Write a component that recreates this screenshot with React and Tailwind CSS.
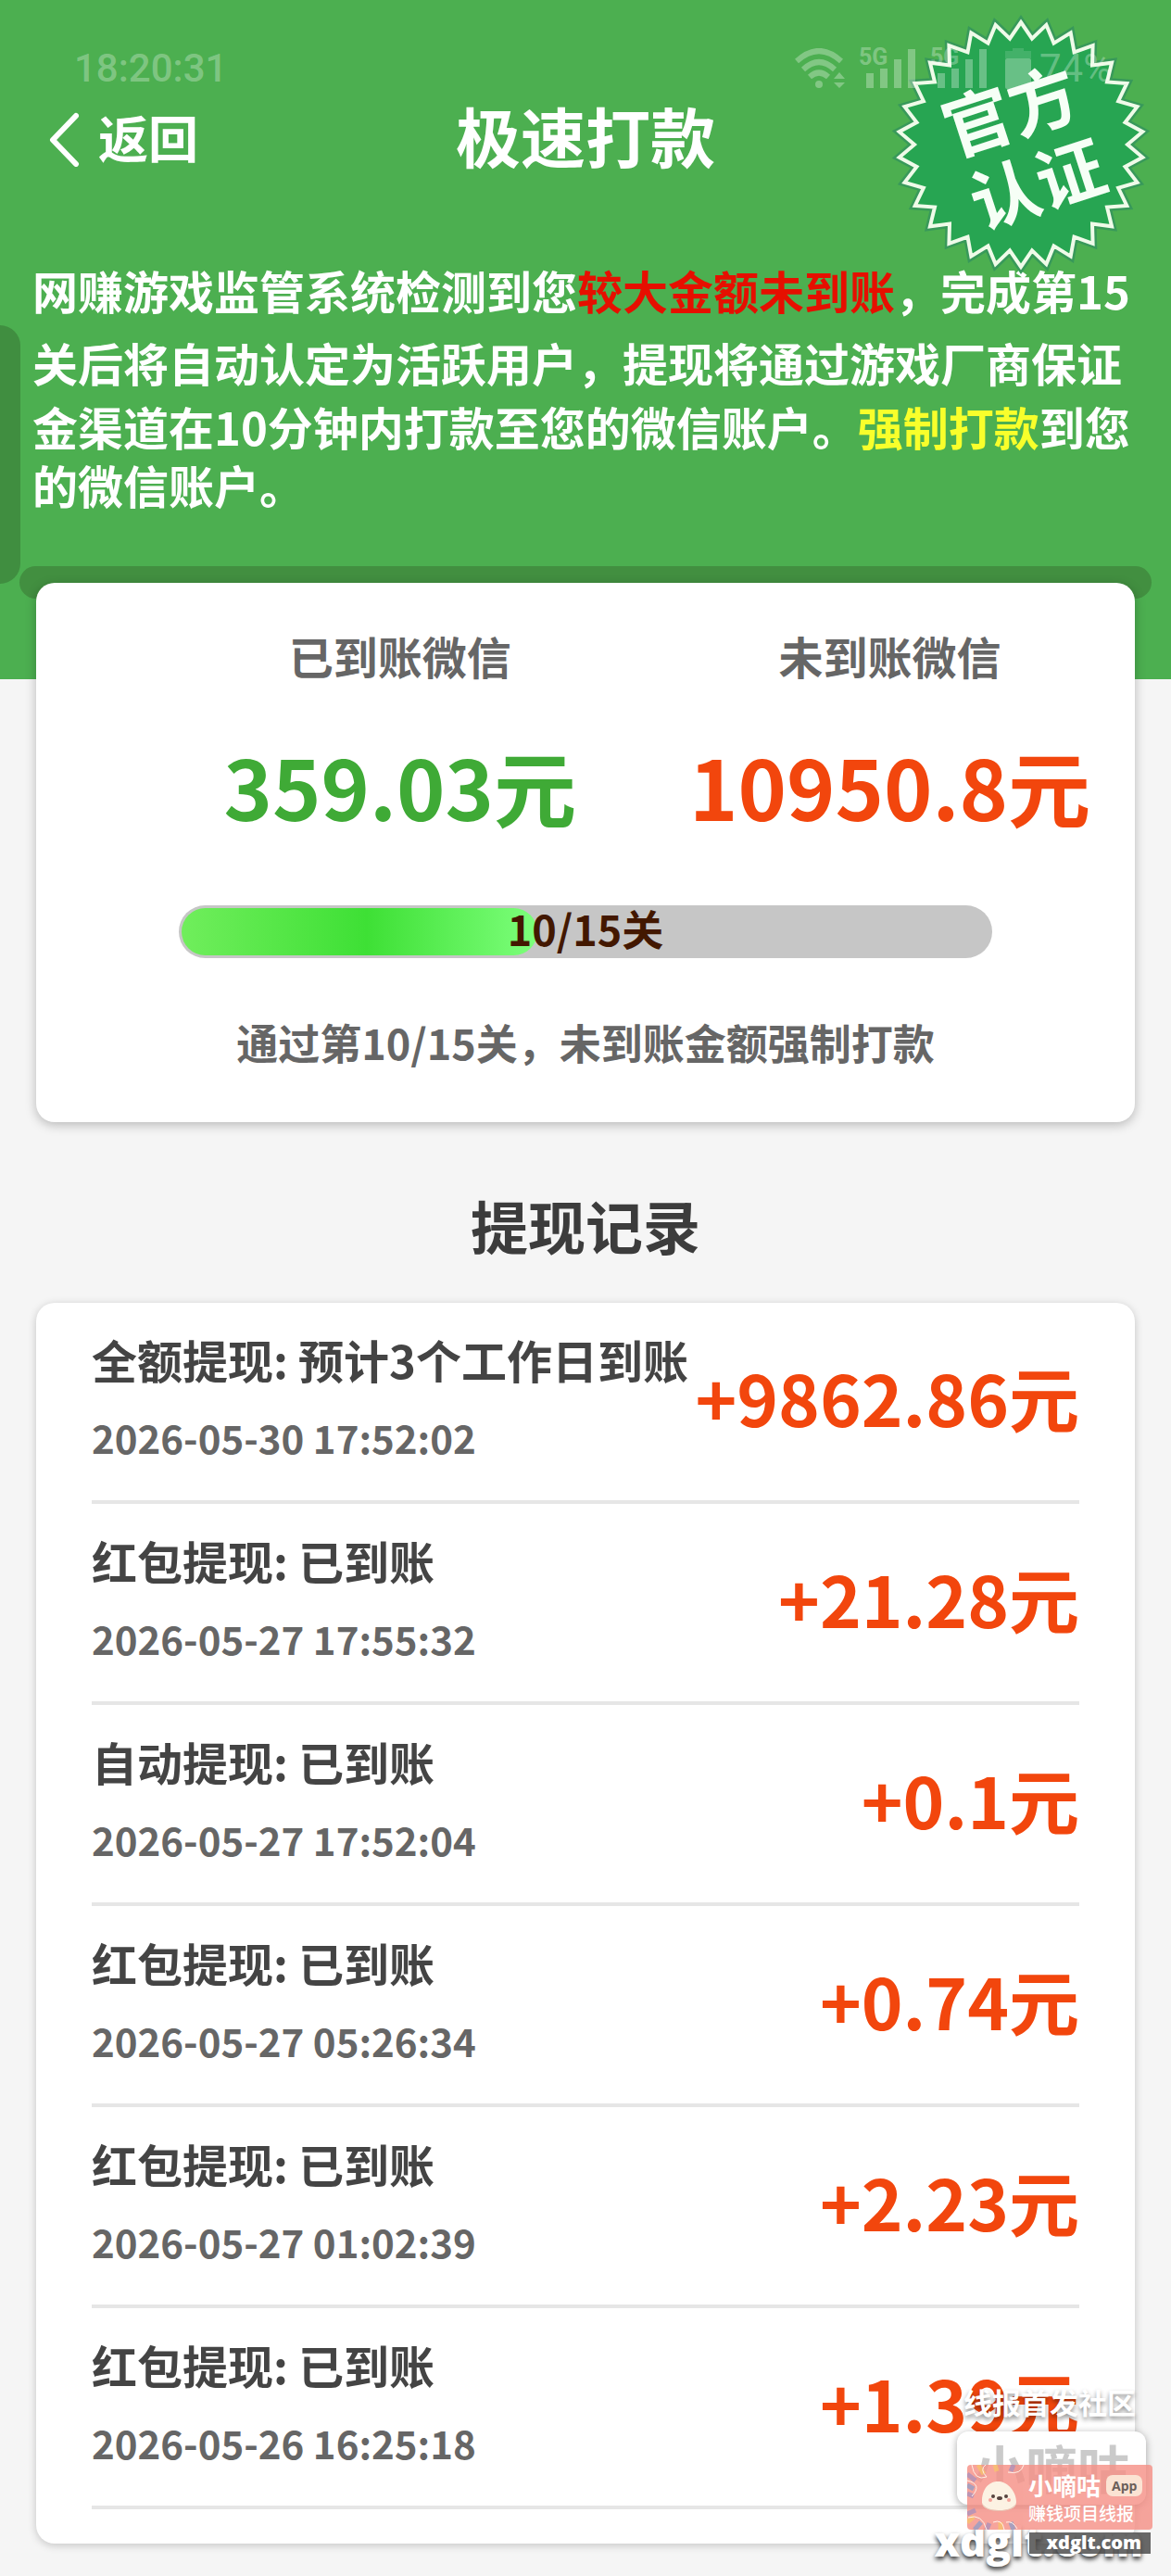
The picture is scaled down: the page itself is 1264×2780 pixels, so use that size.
import React from "react";

const records = [
  { title: "全额提现: 预计3个工作日到账", time: "2026-05-30 17:52:02", amount: "+9862.86元" },
  { title: "红包提现: 已到账", time: "2026-05-27 17:55:32", amount: "+21.28元" },
  { title: "自动提现: 已到账", time: "2026-05-27 17:52:04", amount: "+0.1元" },
  { title: "红包提现: 已到账", time: "2026-05-27 05:26:34", amount: "+0.74元" },
  { title: "红包提现: 已到账", time: "2026-05-27 01:02:39", amount: "+2.23元" },
  { title: "红包提现: 已到账", time: "2026-05-26 16:25:18", amount: "+1.39元" },
];

const sealPoints = Array.from({ length: 60 }, (_, i) => {
  const r = i % 2 === 0 ? 132 : 115;
  const a = (i * Math.PI) / 30 - Math.PI / 2;
  return `${(140 + r * Math.cos(a)).toFixed(1)},${(140 + r * Math.sin(a)).toFixed(1)}`;
}).join(" ");

function Seal() {
  return (
    <div className="absolute top-[16px] right-[22px] h-[280px] w-[280px]">
      <svg viewBox="0 0 280 280" className="h-full w-full" aria-hidden="true">
        <polygon points={sealPoints} fill="#27a552" stroke="#38995a" strokeWidth="9" />
        <polygon points={sealPoints} fill="#27a552" stroke="#effbe9" strokeWidth="4" />
      </svg>
      <div className="absolute inset-0 flex -rotate-[18deg] flex-col items-center justify-center text-[74px] leading-[84px] font-bold text-[#f6fff6]">
        <span>官方</span>
        <span className="pl-2">认证</span>
      </div>
    </div>
  );
}

function Signal() {
  return (
    <div className="relative h-[44px] w-[61px]">
      <span className="absolute top-0 left-0 font-[Roboto] text-[25px] leading-[20px] font-bold">5G</span>
      <svg viewBox="0 0 61 44" className="h-full w-full" fill="currentColor" aria-hidden="true">
        <rect x="8" y="27" width="8" height="16" />
        <rect x="23" y="22" width="8" height="21" />
        <rect x="38" y="12" width="8" height="31" />
        <rect x="53" y="1" width="8" height="42" />
      </svg>
    </div>
  );
}

function StatusBar() {
  return (
    <div className="relative z-10 flex h-[44px] items-center justify-between pr-[64px] pl-[80px] text-white/30">
      <span className="font-[Roboto] text-[42px] leading-[44px] font-medium">18:20:31</span>
      <div className="flex items-center">
        <svg width="54" height="44" viewBox="0 0 54 44" fill="none" stroke="currentColor" strokeWidth="6" aria-hidden="true">
          <path d="M2 14 Q26 -8 50 14" />
          <path d="M9 23 Q26 7 43 23" />
          <path d="M16 31 Q26 22 36 31" />
          <circle cx="26" cy="39" r="4" fill="currentColor" stroke="none" />
          <path d="M42 33 L48 26 L54 33 Z M42 37 L48 43 L54 37 Z" fill="currentColor" stroke="none" />
        </svg>
        <div className="ml-[15px] flex gap-[16px]">
          <Signal />
          <Signal />
        </div>
        <svg width="28" height="44" viewBox="0 0 28 44" className="ml-[20px]" fill="currentColor" aria-hidden="true">
          <path d="M8 0h12v3h8v8H0V3h8z" opacity="0.45" />
          <rect y="11" width="28" height="33" rx="2" />
        </svg>
        <span className="ml-[9px] font-[Roboto] text-[42px] leading-[44px]">74%</span>
      </div>
    </div>
  );
}

function Balance({ label, value, tone }) {
  return (
    <div className="flex flex-col items-center">
      <span className="text-[48px] leading-[70px] font-bold text-[#666]">{label}</span>
      <strong className={"mt-[46px] text-[89px] leading-[120px] font-bold " + tone}>{value}</strong>
    </div>
  );
}

function Watermark() {
  return (
    <div className="absolute right-0 bottom-0 h-[204px] w-[256px] font-bold text-white">
      <span className="absolute top-0 right-[38px] text-[31px] leading-[32px] whitespace-nowrap [text-shadow:0_3px_5px_rgba(0,0,0,0.45)]">线报首发社区</span>
      <div className="absolute top-[48px] right-[27px] h-[79px] w-[204px] rounded-[12px] bg-white text-center text-[56px] leading-[76px] text-[#cacaca] shadow-[0_2px_8px_rgba(0,0,0,0.35)]">小嘀咕</div>
      <span className="absolute right-[30px] bottom-[16px] font-[Open_Sans] text-[44px] leading-[44px] font-extrabold [text-shadow:0_3px_5px_rgba(0,0,0,0.8)]">xdglt.com</span>
      <div className="absolute top-[84px] right-[20px] h-[70px] w-[200px] overflow-hidden rounded-[4px] bg-[#f58f84]/80">
        <svg width="68" height="70" viewBox="0 0 68 70" className="absolute" fill="none" aria-hidden="true">
          <g strokeWidth="5" opacity="0.75">
            <path d="M0 10l9 7M0 31l7 3M0 53l9-4M21 70l3-7M50 0l-3 7" stroke="#a891bd" />
            <path d="M12 0l6 10M30 0l2 7M0 62l7-6M36 70v-8" stroke="#f7c56b" />
            <path d="M0 22l7 4M8 70l7-8M50 70l-3-8" stroke="#8f9ec9" />
          </g>
          <path d="M0 17q17 4 5 17M5 0q3 18 16 13Q13 5 20 0M44 8q14 3 17-8M1 57q15-5 20 13M28 62q10-4 12 8M42 62q7-2 12 7" stroke="#fff1e8" />
          <path d="M16 38C17 22 27 17 35 18c9 1 18 11 18 22 0 7-7 9-19 9-13 0-19-3-18-11z" fill="#fcf2e3" />
          <path d="M16 41c5 11 32 11 37 0-1 12-36 12-37 0z" fill="#e6c9b7" />
          <circle cx="28" cy="34" r="2" fill="#57443f" />
          <circle cx="42" cy="34" r="2" fill="#57443f" />
          <ellipse cx="35" cy="36" rx="3" ry="2" fill="#57443f" />
          <circle cx="25" cy="38" r="2" fill="#f5a49b" />
          <circle cx="45" cy="38" r="2" fill="#f5a49b" />
        </svg>
        <div className="flex flex-col pt-[8px] pl-[66px]">
          <div className="flex items-center gap-[6px]">
            <span className="text-[26px] leading-[28px]">小嘀咕</span>
            <span className="rounded-[7px] bg-[#fbe3d3] px-[6px] font-[Open_Sans] text-[14px] leading-[23px] text-[#6b5f5a]">App</span>
          </div>
          <span className="mt-[3px] text-[19px] leading-[26px] font-medium">赚钱项目线报</span>
        </div>
      </div>
      <div className="absolute right-[22px] bottom-[24px] h-[23px] w-[131px] bg-[#444]/80 pr-[10px] text-right font-[Open_Sans] text-[20px] leading-[21px] font-extrabold">xdglt.com</div>
    </div>
  );
}

export default function App() {
  return (
    <div className="relative min-h-screen overflow-hidden bg-[#f5f5f5] pb-[35px] font-['Noto_Sans_CJK_SC',sans-serif] text-[#444]">
      <header className="relative bg-[#4caf50] pt-[52px] pb-[180px] text-white">
        <Seal />
        <StatusBar />
        <nav className="relative mt-[12px] flex h-[84px] items-center justify-center">
          <button type="button" className="absolute left-[52px] flex items-center gap-[20px] text-[54px] leading-[84px] font-bold">
            <svg width="34" height="60" viewBox="0 0 34 60" fill="none" stroke="currentColor" strokeWidth="6" strokeLinecap="round" strokeLinejoin="round" aria-hidden="true">
              <path d="M30 5 L5 31 L30 57" />
            </svg>
            <span className="-mt-1">返回</span>
          </button>
          <h1 className="-mt-2 text-[70px] leading-[84px] font-bold">极速打款</h1>
        </nav>
        <p className="mt-[79px] pl-[35px] text-[49px] font-bold whitespace-nowrap">
          <span className="block leading-[84px]">网赚游戏监管系统检测到您<span className="text-[#e60f00]">较大金额未到账</span>，完成第15</span>
          <span className="block leading-[72px]">关后将自动认定为活跃用户，提现将通过游戏厂商保证</span>
          <span className="block leading-[66px]">金渠道在10分钟内打款至您的微信账户。<span className="text-[#f8ff2b]">强制打款</span>到您</span>
          <span className="block leading-[60px]">的微信账户。</span>
        </p>
        <div className="absolute top-[351px] left-0 h-[279px] w-[22px] rounded-r-[22px] bg-[#408e40]" />
        <div className="absolute top-[611px] right-[21px] left-[21px] h-[35px] rounded-full bg-[#428f40]" />
      </header>

      <main className="relative -mt-[104px] px-[39px]">
        <section className="rounded-[20px] bg-white pt-[43px] pb-[53px] shadow-[0_3px_12px_rgba(0,0,0,0.25)]">
          <div className="flex justify-end gap-[122px] pr-[48px]">
            <Balance label="已到账微信" value="359.03元" tone="text-[#3faa36]" />
            <Balance label="未到账微信" value="10950.8元" tone="text-[#f2460d]" />
          </div>
          <div className="relative mx-auto mt-[69px] h-[57px] w-[74%] rounded-full bg-[#c6c6c6] p-[3px]">
            <div className="h-full w-[44%] rounded-full bg-[linear-gradient(90deg,#70ee5c_0%,#3ee035_52%,#7dff7b_100%)]" />
            <span className="absolute inset-0 text-center text-[45px] leading-[50px] font-bold text-[#431800]">10/15关</span>
          </div>
          <p className="mt-[58px] text-center text-[45px] leading-[66px] font-bold text-[#666]">通过第10/15关，未到账金额强制打款</p>
        </section>

        <h2 className="pt-[66px] pb-[39px] text-center text-[62px] leading-[90px] font-bold text-[#3c3c3c]">提现记录</h2>

        <ul className="rounded-[20px] bg-white px-[60px] pb-[37px] shadow-[0_2px_10px_rgba(0,0,0,0.2)]">
          {records.map((r) => (
            <li key={r.time} className="flex h-[217px] items-center justify-between border-b-4 border-[#e6e6e6] whitespace-nowrap">
              <div className="flex flex-col pb-2">
                <span className="text-[49px] leading-[84px] font-bold">{r.title}</span>
                <time className="text-[42px] leading-[84px] font-bold text-[#666]">{r.time}</time>
              </div>
              <strong className="pb-3 text-[76px] leading-[112px] font-bold text-[#f2460d]">{r.amount}</strong>
            </li>
          ))}
        </ul>
      </main>
      <Watermark />
    </div>
  );
}
